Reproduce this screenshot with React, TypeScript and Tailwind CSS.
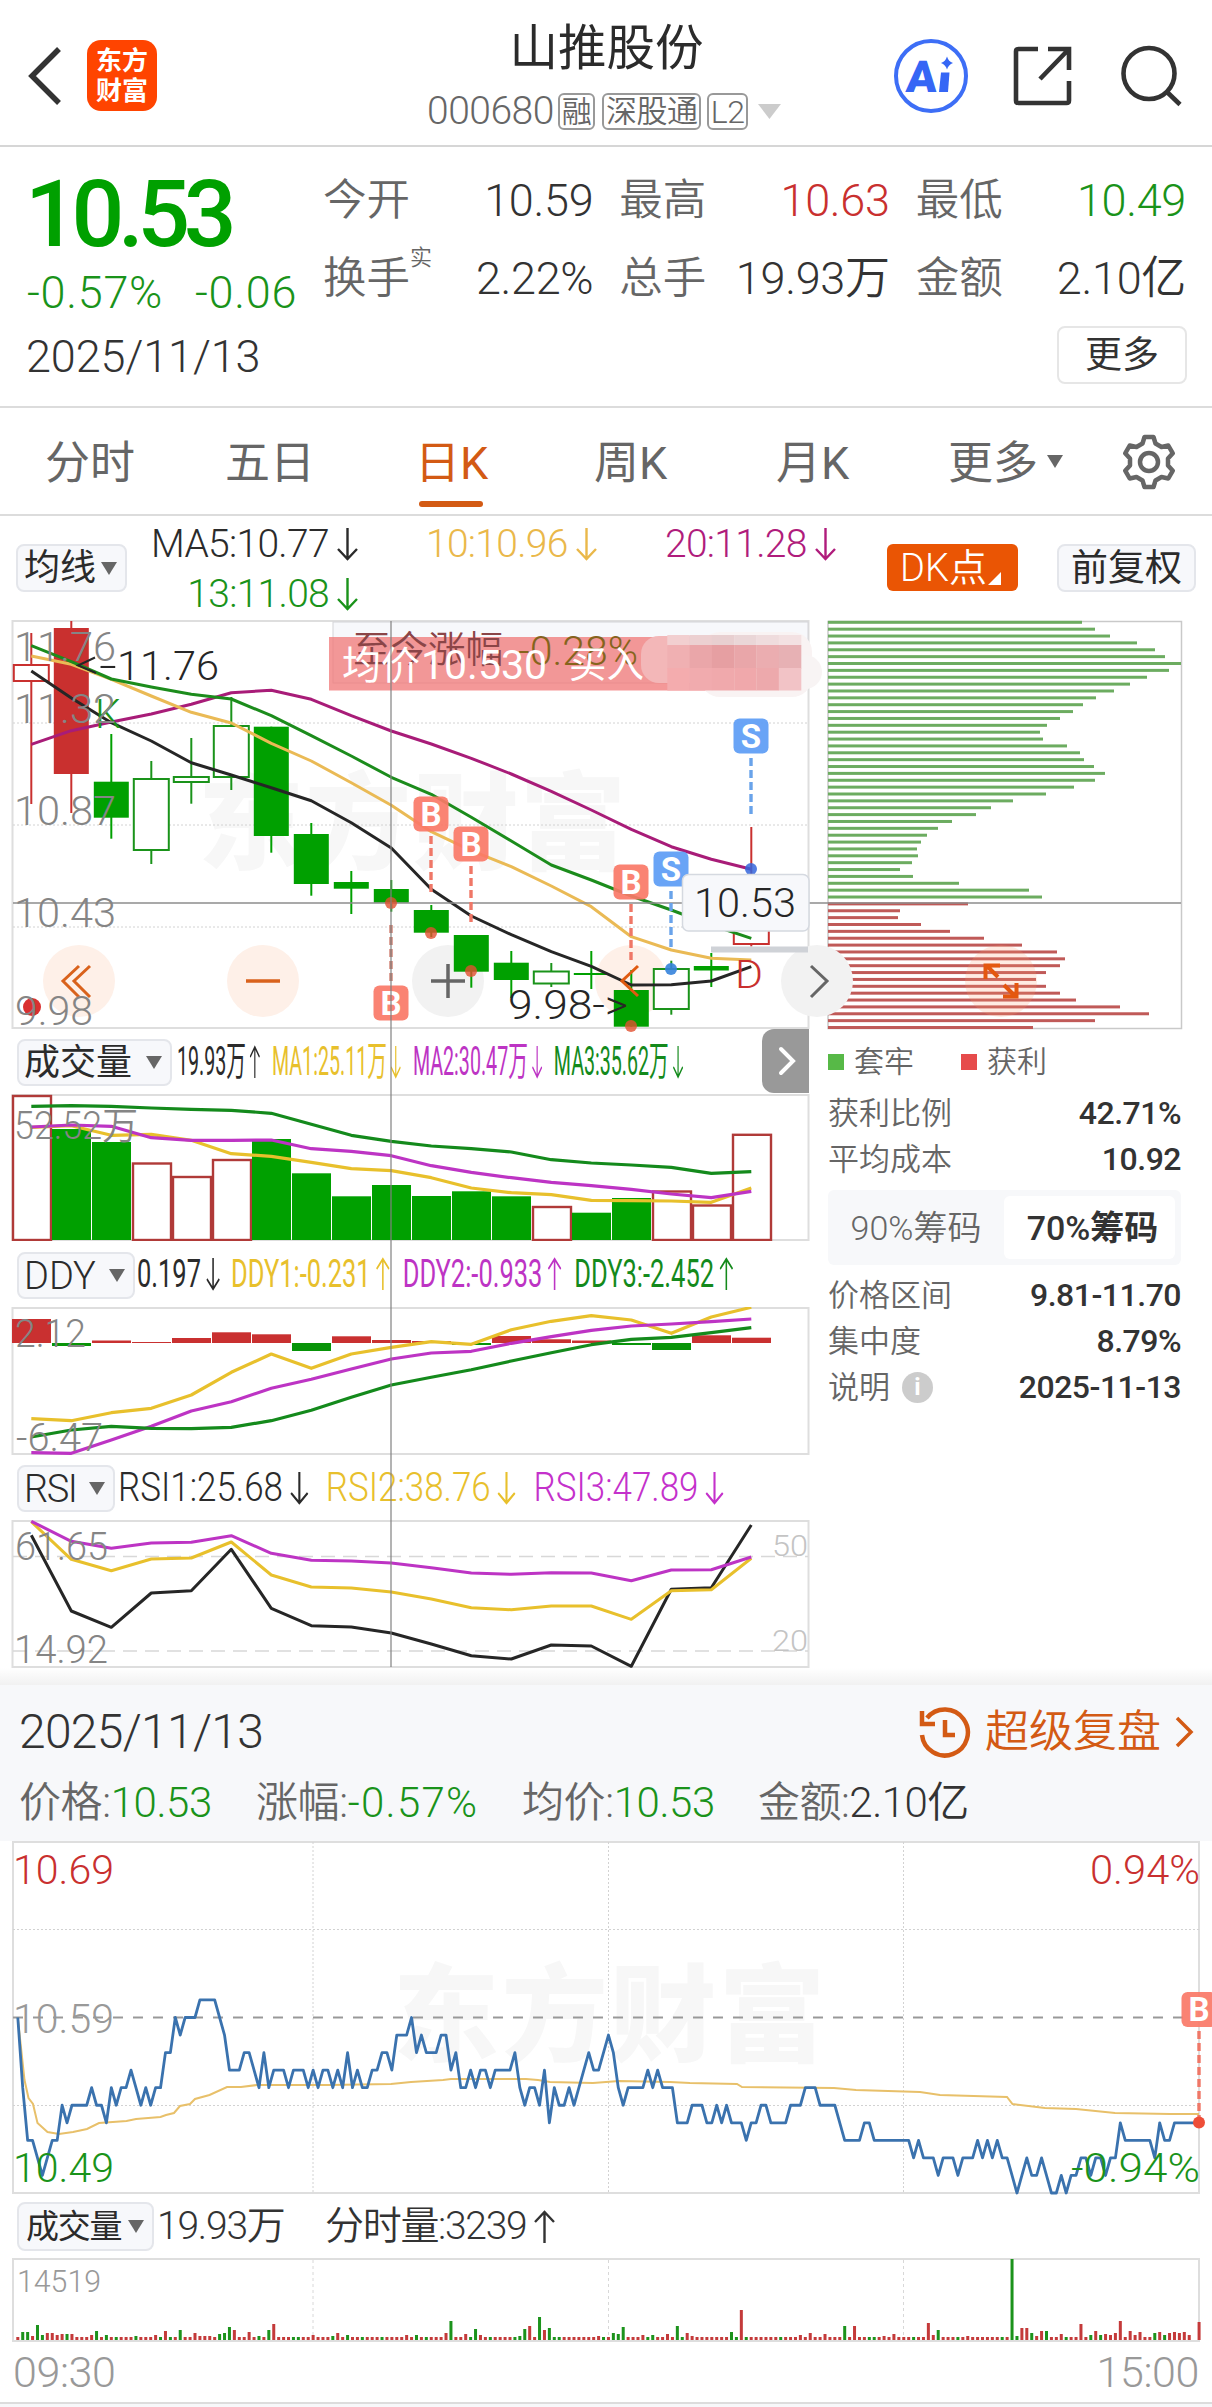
import type { ReactNode } from 'react'

const GREEN = '#00a000'
const RED = '#c9302f'
const STEP = 40
const FIRST = 31.3

// [kind, bodyTop, bodyBottom, wickTop, wickBottom]
type Candle = [string, number, number, number, number]
const candles: Candle[] = [
  ['up', 665, 681, 633, 804],
  ['redFill', 628, 774, 621, 813],
  ['down', 781.7, 817.7, 734, 838.7],
  ['hollow', 779, 850, 761, 864],
  ['hollow', 777, 782, 738, 803.7],
  ['hollow', 726, 777, 697, 790],
  ['down', 726.7, 836, 726.7, 852.7],
  ['down', 834, 884, 823, 895.7],
  ['down', 882, 888.7, 871, 914],
  ['down', 889, 902.7, 880, 911.7],
  ['down', 910, 932.7, 905, 937],
  ['down', 935, 971.7, 935, 987.7],
  ['down', 962.7, 980, 951, 998],
  ['hollow', 971.5, 983.5, 963, 987],
  ['down', 973, 975, 951, 989],
  ['down', 990, 1026.7, 970, 1026.7],
  ['hollow', 969, 1009, 960.7, 1014.7],
  ['down', 966, 970.5, 953, 987],
  ['up', 900, 944, 827, 946.5],
]

const priceLines = [
  { color: '#a81c78', ys: [744.3, 730.7, 722, 714, 704.3, 692.7, 690.3, 699.3, 715.7, 731, 744, 758.3, 774, 791.3, 810, 829.3, 846.7, 859.3, 869.3] },
  { color: '#eaba55', ys: [656, 664.3, 679.3, 696, 712.3, 723, 743.3, 761, 782.7, 805.3, 831.7, 850.7, 866.7, 886, 906.7, 936.7, 950, 958.3, 960] },
  { color: '#1c8c1c', ys: [645.7, 661.7, 679, 687, 694.3, 699, 715.7, 735.7, 756, 777.3, 794.3, 817.3, 841, 865, 880, 896, 910, 925, 938.3] },
  { color: '#262626', ys: [671, 698, 722.7, 741, 762.7, 775, 787.7, 800.7, 822.7, 848, 889.3, 916, 934.7, 951.7, 966.3, 985, 984.7, 981, 966.7] },
]

const volTops = [1095, 1129, 1142, 1162.5, 1176, 1159, 1139, 1173.3, 1196.3, 1185, 1196, 1191.3, 1196.3, 1206, 1212.7, 1198, 1190.5, 1204.5, 1133.8]
const volUp = [0, 3, 4, 5, 13, 16, 17, 18]
const volLines = [
  { color: '#e8c02c', ys: [1127.3, 1125.7, 1135.3, 1134.3, 1140.3, 1153.7, 1156.3, 1162.3, 1168.7, 1170.7, 1177.7, 1188, 1192.7, 1194.7, 1200.3, 1200.7, 1201, 1202.3, 1188] },
  { color: '#bd34c4', ys: [1127, 1125, 1126.3, 1137.7, 1140.3, 1140.3, 1140, 1148.7, 1151.3, 1155.7, 1165.7, 1172.3, 1177.7, 1182.3, 1185.7, 1189.3, 1194, 1197.7, 1191.3] },
  { color: '#148a1c', ys: [1106.3, 1105.7, 1106.3, 1108, 1109.3, 1110.3, 1113.3, 1124.3, 1135.3, 1141.3, 1146, 1148.7, 1152, 1159.7, 1163, 1165, 1167.3, 1173.3, 1171.7] },
]

// positive = red above the zero line, negative = green below
const ddyBars = [24, -3, 2.5, 1, 5, 10.7, 8.7, -8, 6.7, 3, 2, -2, 7, 3.7, 2.5, -2, -7, 7.7, 5.3]
const ddyLines = [
  { color: '#e8c02c', ys: [1418.7, 1420.7, 1412.7, 1408.3, 1395, 1372.3, 1354, 1368.3, 1354, 1347.3, 1341.7, 1344.3, 1329.7, 1321.3, 1315.7, 1320, 1333.3, 1317, 1307.3] },
  { color: '#bd34c4', ys: [1452.7, 1453.3, 1440, 1426.3, 1411, 1401.7, 1388.3, 1379.3, 1369, 1359, 1353, 1351.3, 1343.3, 1336.7, 1330.3, 1326, 1324, 1321.7, 1319] },
  { color: '#148a1c', ys: [1437, 1430, 1426.3, 1428.3, 1428.7, 1427.3, 1420.7, 1410.3, 1397.3, 1385, 1377.3, 1369.7, 1361, 1352.7, 1344.7, 1339.3, 1337.3, 1332.7, 1327.7] },
]

const rsiLines = [
  { color: '#262626', ys: [1535.3, 1611, 1627.3, 1593, 1590.7, 1549.3, 1608.3, 1625.7, 1627, 1633, 1644, 1655.7, 1659, 1645, 1646, 1666.3, 1589.3, 1587.7, 1525] },
  { color: '#e8c02c', ys: [1521.7, 1559.3, 1570.7, 1559, 1558, 1542, 1575, 1587, 1588, 1592, 1599, 1607.7, 1609.7, 1606, 1606, 1619.3, 1590.7, 1589.7, 1558.3] },
  { color: '#bd34c4', ys: [1521.3, 1541.3, 1548.3, 1543, 1542.3, 1535.7, 1553.3, 1560.3, 1561, 1563, 1567.7, 1573, 1574.3, 1572.7, 1573, 1580.7, 1570, 1569.7, 1557] },
]

const chipWidths = [
  254, 267, 282, 309, 327, 337, 353, 341, 319, 302, 286, 268, 255, 245, 232, 219, 212, 215, 239, 252,
  256, 266, 277, 267, 246, 218, 185, 163, 148, 124, 110, 99, 93, 89, 90, 84, 72, 85, 131, 201, 214,
  140, 72, 70, 93, 122, 156, 194, 229, 237, 232, 218, 208, 218, 232, 248, 292, 321, 267, 205,
]

// cents below the previous close, one entry a minute
const minutes = [
  0, 4, 7, 7, 8, 9, 8, 7, 7, 5, 6, 5, 5, 5, 5, 4, 5, 5, 6, 4, 5, 4, 4, 3, 4, 5, 4, 5, 4, 4,
  2, 2, 0, 1, 0, 0, 0, -1, -1, -1, -1, 0, 1, 3, 3, 3, 2, 2, 3, 4, 2, 4, 3, 3, 3, 4, 3, 3, 3, 4,
  3, 4, 3, 3, 4, 3, 4, 2, 4, 3, 4, 4, 3, 3, 2, 2, 3, 1, 1, 1, 0, 2, 1, 2, 2, 2, 1, 1, 3, 2,
  4, 4, 3, 4, 3, 3, 4, 3, 3, 3, 3, 2, 4, 5, 4, 4, 5, 3, 6, 4, 5, 5, 4, 5, 4, 3, 2, 3, 3, 2,
  1, 2, 4, 5, 4, 4, 4, 4, 3, 4, 3, 4, 4, 4, 6, 6, 6, 5, 5, 5, 6, 6, 5, 6, 5, 6, 6, 6, 7, 6,
  6, 5, 5, 6, 6, 6, 6, 5, 5, 5, 4, 4, 4, 5, 5, 5, 5, 6, 7, 7, 7, 7, 6, 6, 7, 7, 7, 7, 7, 7,
  7, 7, 8, 7, 8, 8, 8, 9, 8, 8, 8, 9, 8, 8, 8, 7, 8, 7, 8, 7, 8, 8, 9, 10, 9, 8, 9, 9, 8, 9,
  10, 10, 9, 10, 9, 9, 8, 8, 9, 8, 8, 9, 8, 8, 6, 7, 7, 7, 7, 7, 7, 8, 6, 7, 7, 6, 6, 6, 6, 6, 6,
]
const minuteX = (i: number) => 17.8 + i * 4.922

const average =
  '17.8,2018 24.5,2080 28.5,2098 33,2104 37.5,2123 47.5,2132 59,2134 73,2132 87,2129 99,2123 126.5,2121 136,2119 160.5,2117 166,2115 174,2113 180,2106 190,2104 195,2099 209.5,2095 227,2087 241,2087 257,2085 328,2085 391,2084 411,2082 443,2080 451,2079 526,2079 538,2080 550,2082 593,2083 619,2081 670,2082 690,2083 737,2084 742,2087 834,2088 856,2090 920,2092 940,2095 1007,2097 1012.5,2104 1045,2108 1076,2109 1115,2113 1170,2114 1199,2114'

// [minute, height, falling]
const spikes: [number, number, number][] = [
  [1, 8, 1], [2, 8, 1], [3, 4, 0], [4, 15, 1], [5, 5, 1], [6, 7, 0], [7, 7, 0], [8, 5, 0], [9, 6, 0], [10, 6, 1], [11, 6, 0],
  [15, 5, 0], [16, 9, 1], [18, 5, 1], [24, 4, 1], [28, 5, 0], [30, 9, 0], [33, 10, 1], [36, 7, 0], [37, 4, 0], [38, 4, 0], [39, 4, 0],
  [41, 6, 1], [42, 7, 1], [43, 13, 1], [44, 10, 0], [47, 8, 0], [49, 4, 1], [51, 10, 1], [52, 16, 0], [60, 5, 0], [64, 4, 1], [65, 7, 0],
  [67, 5, 1], [79, 5, 0], [81, 5, 1], [87, 7, 0], [88, 19, 1], [91, 6, 0], [93, 11, 1], [94, 5, 0], [102, 4, 1], [103, 11, 1],
  [104, 14, 0], [106, 23, 1], [107, 10, 0], [108, 12, 1], [118, 4, 0], [121, 7, 1], [122, 6, 1], [123, 13, 1], [127, 5, 0], [129, 5, 1],
  [132, 6, 0], [134, 14, 1], [136, 7, 0], [137, 4, 0], [145, 8, 1], [147, 30, 0], [159, 5, 0], [161, 7, 0], [164, 6, 0], [168, 14, 1],
  [170, 14, 0], [176, 4, 0], [178, 6, 0], [185, 17, 0], [186, 5, 0], [187, 10, 1], [193, 4, 0], [202, 81, 1], [203, 4, 1], [204, 12, 0],
  [205, 12, 0], [206, 7, 1], [207, 4, 0], [208, 9, 0], [209, 9, 1], [212, 6, 0], [216, 16, 0], [218, 5, 1], [219, 9, 0], [220, 5, 1],
  [221, 6, 0], [222, 5, 0], [223, 7, 0], [224, 19, 0], [226, 9, 0], [227, 5, 0], [228, 8, 0], [231, 7, 1], [232, 8, 0], [233, 5, 1],
  [234, 7, 0], [235, 8, 0], [236, 7, 0], [237, 8, 0], [238, 5, 0], [240, 18, 0],
]

const mosaic = [
  ['#f3d3d4', '#f2cfd0', '#ecd0d1', '#e8cfd0', '#ead6d7', '#efdcdd', '#f3e1e2'],
  ['#f3b5b7', '#f0b0b2', '#eaa6a9', '#e69fa2', '#e9a6a9', '#ebadb0', '#e7b1b4'],
  ['#f4a5a7', '#f4acae', '#f1abae', '#f0a9ac', '#f0a8ab', '#eda9ac', '#f2c3c6'],
]

function line(ys: number[]) {
  return ys.map((y, i) => `${FIRST + i * STEP},${y}`).join(' ')
}

interface LabelProps {
  x: number
  y: number
  w: number
  size?: number
  fill?: string
  weight?: number
  children: ReactNode
}

function Label({ x, y, w, size = 41, fill = '#858585', weight = 350, children }: LabelProps) {
  return (
    <text x={x} y={y} textLength={w} lengthAdjust="spacingAndGlyphs" fontSize={size} fill={fill} fontWeight={weight}>
      {children}
    </text>
  )
}

function Lines({ data, width = 3 }: { data: { color: string; ys: number[] }[]; width?: number }) {
  return (
    <>
      {data.map((l) => (
        <polyline key={l.color} points={line(l.ys)} fill="none" stroke={l.color} strokeWidth={width} strokeLinejoin="round" />
      ))}
    </>
  )
}

function Frame({ x = 12.5, y, w = 796, h }: { x?: number; y: number; w?: number; h: number }) {
  return <rect x={x} y={y} width={w} height={h} fill="none" stroke="#dedede" strokeWidth="2" />
}

function Arrow({ up = false }: { up?: boolean }) {
  return (
    <svg width="21" height="34" viewBox="0 0 21 34" className="ml-[8px] shrink-0" fill="none" stroke="currentColor" strokeWidth="2.4">
      {up ? <path d="M10.5 33V2M1 12 10.5 2 20 12" /> : <path d="M10.5 1v31M1 22l9.5 10L20 22" />}
    </svg>
  )
}

function Caret({ className = 'text-[#666]' }: { className?: string }) {
  return (
    <svg width="16" height="13" viewBox="0 0 16 13" className={className}>
      <path d="M0 0h16L8 13z" fill="currentColor" />
    </svg>
  )
}

function Badge({ x, y, kind }: { x: number; y: number; kind: 'B' | 'S' }) {
  return (
    <g>
      <rect x={x - 17.5} y={y} width="35" height="35" rx="6" fill={kind === 'B' ? '#fa7867' : '#5c9cf5'} fillOpacity="0.92" />
      <text x={x} y={y + 29} textAnchor="middle" fontSize="33" fontWeight="700" fill="#fff">
        {kind}
      </text>
    </g>
  )
}

function Dash({ x, y1, y2, color }: { x: number; y1: number; y2: number; color: string }) {
  return <line x1={x} x2={x} y1={y1} y2={y2} stroke={color} strokeWidth="3.4" strokeDasharray="8 4" />
}

function Reading({ color, up, children }: { color: string; up?: boolean; children: ReactNode }) {
  return (
    <span className={`flex items-center leading-none whitespace-nowrap ${color}`}>
      {children}
      <Arrow up={up} />
    </span>
  )
}

function Picker({ className, children }: { className: string; children: ReactNode }) {
  return (
    <button
      className={`flex shrink-0 items-center justify-between rounded-[8px] border-2 border-[#e4e6eb] bg-[#f7f8fb] leading-none whitespace-nowrap text-[#2b2b2b] ${className}`}
    >
      {children}
      <Caret />
    </button>
  )
}

function Header() {
  return (
    <header className="grid h-[147px] grid-cols-[429px_352px_1fr] border-b-2 border-[#d6d6d6]">
      <div className="flex items-center pt-[6px] pl-[27px]">
        <svg width="36" height="60" viewBox="0 0 36 60" fill="none" stroke="#333" strokeWidth="5.5">
          <path d="M32 3 5 30l27 27" />
        </svg>
        <div className="ml-[24px] flex h-[71px] w-[70px] flex-col items-center justify-center rounded-[14px] bg-[#ff4400] text-[26px] leading-[30px] font-bold text-white">
          <span>东方</span>
          <span>财富</span>
        </div>
      </div>
      <div className="flex flex-col items-center">
        <h1 className="mt-[25px] ml-[3px] text-[48.5px] leading-none font-normal text-[#2b2b2b]">山推股份</h1>
        <div className="mt-[19px] flex h-[38px] w-full items-center text-[39px] leading-none font-[350] tracking-[-0.5px] text-[#666]">
          <span className="-ml-[2px] w-[131px]">000680</span>
          <span className="flex h-[37px] w-[38px] items-center justify-center rounded-[6px] border-2 border-[#999] text-[30px]">融</span>
          <span className="ml-[7px] flex h-[37px] w-[99px] items-center justify-center rounded-[6px] border-2 border-[#999] text-[31px]">深股通</span>
          <span className="ml-[6px] flex h-[37px] w-[41px] items-center justify-center rounded-[6px] border-2 border-[#999] text-[32px]">L2</span>
          <svg width="23" height="15" viewBox="0 0 23 15" className="ml-[10px]">
            <path d="M0 0h23L11.5 15z" fill="#ccc" />
          </svg>
        </div>
      </div>
      <div className="flex items-center pt-[6px] pl-[112px]">
        <svg width="76" height="76" viewBox="0 0 76 76">
          <circle cx="38" cy="38" r="35" fill="none" stroke="#3d6ef6" strokeWidth="4" />
          <text x="12" y="54" fontSize="44" fontWeight="900" fill="#3566f5" textLength="31" lengthAdjust="spacingAndGlyphs" transform="skewX(-4) translate(4 0)">
            A
          </text>
          <path d="M48 34.5h8.500L55 54h-9z" fill="#3566f5" />
          <path d="M54 18.500q1.500 5 6 6.500-4.500 1.500-6 6.500-1.500-5-6-6.500 4.500-1.500 6-6.500z" fill="#3566f5" />
        </svg>
        <svg width="60" height="60" viewBox="0 0 60 60" className="ml-[44px]" fill="none" stroke="#333" strokeWidth="4.600">
          <path d="M25 3H5.500Q3 3 3 5.500v49Q3 57 5.500 57h48q2.500 0 2.500-2.500V35" />
          <path d="M35 3h21v21M56 3 27 33" />
        </svg>
        <svg width="62" height="62" viewBox="0 0 62 62" className="ml-[47px]" fill="none" stroke="#333" strokeWidth="4.600">
          <circle cx="29" cy="28.500" r="25.500" />
          <path d="M46 46 60 59.500" />
        </svg>
      </div>
    </header>
  )
}

function Stat({ label, value, color = 'text-[#333]', sup }: { label: string; value: string; color?: string; sup?: string }) {
  return (
    <div className="flex h-[46px] items-center justify-between leading-none">
      <span className="-ml-[2px] flex pt-[4px] text-[43.5px] font-[350] text-[#666]">
        {label}
        {sup && <sup className="-top-[10px] text-[22px] leading-none">{sup}</sup>}
      </span>
      <span className={`pt-[3px] text-[45px] font-[350] tracking-[-0.3px] ${color}`}>{value}</span>
    </div>
  )
}

function Quote() {
  return (
    <section className="flex h-[261px] border-b-2 border-[#dcdcdc]">
      <div className="w-[325px] pl-[27px] font-[350]">
        <div className="mt-[21px] -ml-[2px] text-[93px] leading-none font-medium tracking-[-6.400px] text-[#00a000]">10.53</div>
        <div className="mt-[9px] flex text-[45px] leading-none tracking-[0.700px] text-[#1a931a]">
          <span className="w-[168px]">-0.57%</span>
          <span>-0.06</span>
        </div>
        <div className="mt-[19px] -ml-[1px] text-[45px] leading-none tracking-[-0.100px] text-[#333]">2025/11/13</div>
      </div>
      <div className="w-[861px]">
        <div className="mt-[29px] grid grid-cols-3 gap-x-[28px] gap-y-[32px]">
          <Stat label="今开" value="10.59" />
          <Stat label="最高" value="10.63" color="text-[#c9302f]" />
          <Stat label="最低" value="10.49" color="text-[#1a931a]" />
          <Stat label="换手" value="2.22%" sup="实" />
          <Stat label="总手" value="19.93万" />
          <Stat label="金额" value="2.10亿" />
        </div>
        <button className="mt-[26px] -mr-[1px] ml-auto flex h-[58px] w-[130px] items-center justify-center rounded-[8px] border-2 border-[#e6e6e6] text-[37px] leading-none text-[#333]">
          更多
        </button>
      </div>
    </section>
  )
}

const tabs = [
  { name: '分时', width: 'w-[180px]' },
  { name: '五日', width: 'w-[190px]' },
  { name: '日K', width: 'w-[179px]', active: true },
  { name: '周K', width: 'w-[182px]' },
  { name: '月K', width: 'w-[172px]' },
]

function Tabs() {
  return (
    <nav className="flex h-[108px] border-b-2 border-[#dcdcdc] pl-[45px] text-[45px] leading-none text-[#666]">
      {tabs.map((t) => (
        <div key={t.name} className={`pt-[33px] ${t.width} ${t.active ? 'text-[#d35a14]' : ''}`}>
          {t.name}
          {t.active && <div className="mt-[15px] ml-[4px] h-[6px] w-[64px] rounded-full bg-[#d35a14]" />}
        </div>
      ))}
      <div className="flex w-[173px] pt-[33px]">
        更多
        <Caret className="mt-[14px] ml-[9px] text-[#666]" />
      </div>
      <svg width="56" height="56" viewBox="0 0 56 56" className="mt-[26px]" fill="none" stroke="#666" strokeWidth="4.500" strokeLinejoin="round">
        <path d="M23.500 3h9l2 6.500 6 3.500 6.800-1.500 4.500 7.800-4.800 5.200v7l4.800 5.200-4.500 7.800-6.800-1.500-6 3.500-2 6.500h-9l-2-6.500-6-3.500-6.800 1.500-4.500-7.800L9 31.500v-7l-4.800-5.200 4.500-7.800 6.800 1.500 6-3.500z" />
        <circle cx="28" cy="28" r="9" />
      </svg>
    </nav>
  )
}

function Averages() {
  return (
    <div className="flex h-[104px] text-[39px] font-[350]">
      <Picker className="mt-[28px] ml-[16px] h-[48px] w-[111px] pr-[8px] pl-[6px] text-[36px] font-normal">均线</Picker>
      <div className="mt-[3px] ml-[24px] grid w-[736px] grid-cols-[275px_239px_222px] grid-rows-[50px_50px] tracking-[-0.700px]">
        <Reading color="text-[#2b2b2b]">MA5:10.77</Reading>
        <Reading color="text-[#eab84a]">10:10.96</Reading>
        <Reading color="text-[#b01c7c]">20:11.28</Reading>
        <div className="flex w-[207px] justify-end">
          <Reading color="text-[#1a931a]">13:11.08</Reading>
        </div>
      </div>
      <button className="mt-[28px] flex h-[47px] w-[131px] rounded-[6px] bg-[#ea5504] pl-[13px] text-[38px] leading-[48px] font-[350] text-white">
        DK点
        <svg width="13" height="13" viewBox="0 0 13 13" className="mt-[28px] ml-[1px] shrink-0">
          <path d="M13 0v13H0z" fill="#fff" />
        </svg>
      </button>
      <button className="mt-[28px] ml-[39px] flex h-[48px] w-[139px] items-center justify-center rounded-[8px] border-2 border-[#e4e6eb] bg-[#f7f8fb] text-[37px] leading-none font-normal text-[#2b2b2b]">
        前复权
      </button>
    </div>
  )
}

function CandleChart() {
  return (
    <svg width="828" height="409" viewBox="0 620 828 409" className="block overflow-visible">
      <text x="198" y="861" textLength="428" fontSize="106" fontWeight="900" fill="#f7f7f7">
        东方财富
      </text>
      <Frame y={621} h={407} />
      {[723, 825, 927].map((y) => (
        <line key={y} x1="13" x2="808" y1={y} y2={y} stroke="#d2d2d2" strokeDasharray="2 2" />
      ))}
      {[[79, '#fef0e8'], [263, '#fef0e8'], [448, '#f2f2f2'], [631, '#fef0e8'], [817, '#f2f2f2']].map(([x, c]) => (
        <circle key={x} cx={x} cy="981" r="36" fill={c as string} />
      ))}
      {candles.map(([kind, top, bottom, high, low], i) => {
        const x = FIRST + i * STEP
        const color = kind === 'up' || kind === 'redFill' ? RED : kind === 'hollow' ? '#1a931a' : GREEN
        const open = kind === 'up' || kind === 'hollow'
        return (
          <g key={i}>
            <line x1={x} x2={x} y1={high} y2={low} stroke={color} strokeWidth="2" />
            <rect
              x={x - 17.5}
              y={top}
              width="35"
              height={bottom - top}
              fill={open ? '#fff' : color}
              stroke={open ? color : 'none'}
              strokeWidth="2"
            />
          </g>
        )
      })}
      <rect x="711" y="946.500" width="97" height="6" fill="#cfd2d7" />
      <Lines data={priceLines} />
      <line x1="13" x2="828" y1="903" y2="903" stroke="#8c8c8c" strokeWidth="1.500" />

      <Label x={14} y={661} w={102}>11.76</Label>
      <Label x={95} y={728} w={26} fill="#1a931a">K</Label>
      <Label x={14} y={723} w={102}>11.32</Label>
      <Label x={14} y={825} w={102}>10.87</Label>
      <Label x={14} y={927} w={102}>10.43</Label>
      <path d="M95 657.500 78 665.500l18 7.500" fill="none" stroke="#262626" strokeWidth="2" />
      <Label x={99} y={680} w={18} fill="#262626">-</Label>
      <Label x={117} y={680} w={102} fill="#262626">11.76</Label>
      <Label x={508} y={1019} w={120} fill="#262626">{'9.98->'}</Label>
      <Label x={735} y={988} w={28} size={38} fill="#c9302f">D</Label>

      {/* overlapping cost banner */}
      <rect x="333" y="622" width="475" height="61" fill="#f7f8fb" stroke="#d4d4d8" />
      <rect x="329" y="637" width="473" height="53.500" fill="#f07878" fillOpacity="0.76" />
      <Label x={353} y={663} w={150} size={37} fill="#8b4547">至今涨幅</Label>
      <Label x={518} y={665} w={120} fill="#85641c">-0.28%</Label>
      <Label x={342} y={679} w={78} size={39} fill="#fff" weight={400}>均价</Label>
      <Label x={421} y={679} w={126} fill="#fff" weight={400}>10.530</Label>
      <Label x={569} y={678} w={75} size={37} fill="#fff" weight={400}>买入</Label>
      <rect x="700" y="632" width="112" height="65" rx="20" fill="#f9f3f3" />
      <circle cx="805" cy="672" r="17" fill="#f8f4f4" />
      <rect x="641" y="636" width="70" height="47" rx="18" fill="#f3b7b8" />
      {mosaic.map((row, r) =>
        row.map((c, i) =>
          i === 0 ? null : (
            <rect key={`${r}-${i}`} x={645 + i * 22.3} y={[635, 645, 668][r]} width="22.500" height={[10.5, 23.5, 22.5][r]} fill={c} />
          ),
        ),
      )}

      <g fill="none" strokeWidth="3">
        <path d="M79 966 63 981l16 16M90 966 74 981l16 16" stroke="#d9621c" />
        <path d="M246 981h34" stroke="#d9621c" strokeWidth="3.500" />
        <path d="M431 981h34M448 964v34" stroke="#666" strokeWidth="3.500" />
        <path d="M638 966l-16 15 16 15" stroke="#e05a10" />
        <path d="M811 966l16 15-16 16" stroke="#666" />
      </g>
      <circle cx="32" cy="1007" r="9" fill="#d93030" />
      <Label x={15} y={1025} w={78}>9.98</Label>

      <Dash x={391} y1={925} y2={981} color="#d08072" />
      <Dash x={431} y1={836} y2={892} color="#ef7767" />
      <Dash x={471} y1={866} y2={922} color="#ef7767" />
      <Dash x={631} y1={904} y2={960} color="#ef7767" />
      <Dash x={671} y1={891} y2={948} color="#69a3ea" />
      <Dash x={751} y1={758} y2={816} color="#69a3ea" />
      {[[391, 903], [431, 933], [471, 971], [631, 1026]].map(([x, y]) => (
        <circle key={x} cx={x} cy={y} r="6" fill="#e2502f" fillOpacity="0.8" />
      ))}
      <circle cx="671" cy="969" r="6" fill="#3583dc" fillOpacity="0.9" />
      <circle cx="751" cy="869" r="6" fill="#3566dc" fillOpacity="0.85" />
      <Badge x={391} y={985.5} kind="B" />
      <Badge x={431} y={796.5} kind="B" />
      <Badge x={471} y={826.5} kind="B" />
      <Badge x={631} y={864.5} kind="B" />
      <Badge x={671} y={851.5} kind="S" />
      <Badge x={751} y={718.5} kind="S" />

      <rect x="682.500" y="874.500" width="126.500" height="56.500" rx="6" fill="#f7f8fb" stroke="#d5d9e0" strokeWidth="1.500" />
      <Label x={694} y={917} w={102} fill="#262626">10.53</Label>
    </svg>
  )
}

function VolumeChart() {
  return (
    <svg width="828" height="147" viewBox="0 1094 828 147" className="block">
      <Frame y={1095} h={145} />
      {volTops.map((top, i) => {
        const x = 12 + i * STEP
        return volUp.includes(i) ? (
          <rect key={i} x={x + 1} y={top + 1} width="38" height={1239 - top} fill="#fff" stroke="#b03a38" strokeWidth="2.400" />
        ) : (
          <rect key={i} x={x} y={top} width="39" height={1240 - top} fill={GREEN} />
        )
      })}
      <Lines data={volLines} width={3.2} />
      <Label x={14} y={1139} w={124} size={38}>52.52万</Label>
    </svg>
  )
}

function DdyChart() {
  return (
    <svg width="828" height="148" viewBox="0 1307 828 148" className="block">
      <Frame y={1308} h={146} />
      {ddyBars.map((v, i) => (
        <rect key={i} x={12 + i * STEP} y={v > 0 ? 1343 - v : 1343} width="39" height={Math.abs(v)} fill={v > 0 ? '#c93030' : '#089408'} />
      ))}
      <Lines data={ddyLines} width={3.2} />
      <Label x={15} y={1347} w={71} size={38}>2.12</Label>
      <Label x={16} y={1451} w={87} size={38}>-6.47</Label>
    </svg>
  )
}

function RsiChart() {
  return (
    <svg width="828" height="148" viewBox="0 1520 828 148" className="block">
      <Frame y={1521} h={146} />
      {[1556.5, 1651].map((y) => (
        <line key={y} x1="13" x2="808" y1={y} y2={y} stroke="#d8d8d8" strokeWidth="1.500" strokeDasharray="14 8" />
      ))}
      <Lines data={rsiLines} width={3} />
      <Label x={15} y={1560} w={93} size={38}>61.65</Label>
      <Label x={14} y={1663} w={94} size={38}>14.92</Label>
      <Label x={772} y={1556} w={36} size={30} fill="#c4c4c4">50</Label>
      <Label x={772} y={1651} w={36} size={30} fill="#c4c4c4">20</Label>
    </svg>
  )
}

function ChipChart() {
  return (
    <svg width="384" height="409" viewBox="828 620 384 409" className="block overflow-visible">
      <rect x="828" y="621.500" width="353.500" height="407" fill="none" stroke="#c9c9c9" strokeWidth="1.500" />
      {chipWidths.map((w, i) => (
        <rect key={i} x="828" y={620.8 + i * 6.868} width={w} height="3" fill={i < 41 ? '#6cac60' : '#c05a58'} />
      ))}
      <line x1="828" x2="1181" y1="903" y2="903" stroke="#8c8c8c" strokeWidth="1.500" />
      <circle cx="1001" cy="981" r="36" fill="#ff9a70" fillOpacity="0.2" />
      <path d="M998 977l-12-12M985.500 979v-13.500H1000M1004 985l12 12M1016.500 983v13.500H1003" fill="none" stroke="#e4570f" strokeWidth="4" />
    </svg>
  )
}

function ChipRow({ label, value, info }: { label: string; value: string; info?: boolean }) {
  return (
    <div className="flex h-[46px] items-center justify-between leading-none">
      <span className="flex items-center text-[31px] font-[350] text-[#666]">
        {label}
        {info && (
          <i className="ml-[12px] flex h-[31px] w-[31px] items-center justify-center rounded-full bg-[#ccc] text-[24px] font-bold text-white not-italic">i</i>
        )}
      </span>
      <span className="text-[32px] font-medium tracking-[-0.500px] text-[#333]">{value}</span>
    </div>
  )
}

function ChipPanel() {
  return (
    <aside className="w-[353px]">
      <ChipChart />
      <div className="mt-[16px] flex h-[34px] items-center text-[30px] leading-none font-[350] text-[#666]">
        <span className="mr-[10px] h-[16px] w-[16px] bg-[#57b947]" />
        套牢
        <span className="mr-[10px] ml-[47px] h-[16px] w-[16px] bg-[#e64b4b]" />
        获利
      </div>
      <div className="mt-[11px]">
        <ChipRow label="获利比例" value="42.71%" />
        <ChipRow label="平均成本" value="10.92" />
      </div>
      <div className="mt-[8px] flex h-[75px] rounded-[6px] bg-[#f7f8fa] p-[6px] text-[34px] leading-none">
        <button className="w-[170px] pr-[6px] font-[350] text-[#666]">90%筹码</button>
        <button className="w-[171px] rounded-[6px] bg-white pl-[6px] font-medium text-[#333]">
          70%<b className="font-semibold">筹码</b>
        </button>
      </div>
      <div className="mt-[7px]">
        <ChipRow label="价格区间" value="9.81-11.70" />
        <ChipRow label="集中度" value="8.79%" />
        <ChipRow label="说明" value="2025-11-13" info />
      </div>
    </aside>
  )
}

function Indicators() {
  return (
    <main className="flex">
      <div className="relative w-[828px]">
        <CandleChart />
        <div className="flex h-[65px] pl-[17px] text-[40px] font-normal">
          <Picker className="mt-[10px] h-[47px] w-[155px] pr-[8px] pl-[5px] text-[36px]">成交量</Picker>
          <div className="ml-[5px] flex w-[560px] origin-left scale-x-[0.491] items-center">
            <Reading color="mr-[24px] text-[#2b2b2b]" up>19.93万</Reading>
            <Reading color="mr-[24px] text-[#e8c02c]">MA1:25.11万</Reading>
            <Reading color="mr-[24px] text-[#bd34c4]">MA2:30.47万</Reading>
            <Reading color="text-[#148a1c]">MA3:35.62万</Reading>
          </div>
          <button className="mr-[19px] ml-auto flex h-[64px] w-[47px] shrink-0 items-center justify-center rounded-l-[12px] bg-[#999] pl-[5px]">
            <svg width="20" height="30" viewBox="0 0 20 30" fill="none" stroke="#fff" strokeWidth="4" strokeLinecap="round">
              <path d="M3 3l12 12L3 27" />
            </svg>
          </button>
        </div>
        <VolumeChart />
        <div className="flex h-[66px] pl-[17px] text-[39px] font-normal">
          <Picker className="mt-[11px] h-[47px] w-[118px] pr-[8px] pl-[5px] text-[38px] font-[350]">DDY</Picker>
          <div className="ml-[2px] flex origin-left scale-x-[0.653] items-center">
            <Reading color="mr-[17px] text-[#2b2b2b]">0.197</Reading>
            <Reading color="mr-[20px] text-[#e8c02c]" up>DDY1:-0.231</Reading>
            <Reading color="mr-[20px] text-[#bd34c4]" up>DDY2:-0.933</Reading>
            <Reading color="text-[#148a1c]" up>DDY3:-2.452</Reading>
          </div>
        </div>
        <DdyChart />
        <div className="flex h-[65px] pl-[17px] text-[40px] font-[350]">
          <Picker className="mt-[10px] h-[47px] w-[98px] pr-[8px] pl-[5px] text-[38px] tracking-[-1.500px]">RSI</Picker>
          <div className="ml-[3px] flex origin-left scale-x-[0.874] items-center">
            <Reading color="mr-[20px] text-[#2b2b2b]">RSI1:25.68</Reading>
            <Reading color="mr-[20px] text-[#e8c02c]">RSI2:38.76</Reading>
            <Reading color="text-[#c431cb]">RSI3:47.89</Reading>
          </div>
        </div>
        <RsiChart />
        {/* crosshair runs through every pane */}
        <div className="absolute top-[1px] left-[390px] h-[1046px] w-[2px] bg-[#808080]/60" />
      </div>
      <ChipPanel />
    </main>
  )
}

function Replay() {
  return (
    <section className="h-[156px] bg-[#f7f8fa] font-[350]">
      <div className="flex h-[92px] items-center justify-between pt-[2px] pr-[18px] pl-[19px] leading-none">
        <span className="text-[48px] tracking-[-0.700px] text-[#333]">2025/11/13</span>
        <span className="flex items-center text-[44px] text-[#d35a14]">
          <svg width="53" height="53" viewBox="0 0 53 53" className="mr-[14px]" fill="none" stroke="currentColor" strokeWidth="4.500">
            <path d="M4 29a23 23 0 1 0 5-17" />
            <path d="M4 5v13h13" />
            <path d="M27 14v15h10" />
          </svg>
          超级复盘
          <svg width="20" height="32" viewBox="0 0 20 32" className="ml-[13px]" fill="none" stroke="currentColor" strokeWidth="3.500">
            <path d="M3 2l14 14L3 30" />
          </svg>
        </span>
      </div>
      <div className="flex h-[52px] items-center pl-[19px] text-[42px] leading-none tracking-[-0.400px] whitespace-nowrap text-[#666]">
        <span className="w-[237px]">价格:<span className="text-[#1a931a]">10.53</span></span>
        <span className="w-[266px]">涨幅:<span className="tracking-[1.300px] text-[#1a931a]">-0.57%</span></span>
        <span className="w-[236px]">均价:<span className="text-[#1a931a]">10.53</span></span>
        <span className="tracking-[-0.500px]">金额:<span className="text-[#333]">2.10亿</span></span>
      </div>
    </section>
  )
}

function MinuteChart() {
  return (
    <svg width="1212" height="354" viewBox="0 1841 1212 354" className="block">
      <text x="393" y="2053" textLength="432" fontSize="106" fontWeight="900" fill="#f7f7f7">
        东方财富
      </text>
      <Frame x={13} y={1842} w={1186} h={351} />
      {[313, 608.5, 903.5].map((x) => (
        <line key={x} x1={x} x2={x} y1="1842" y2="2193" stroke="#d2d2d2" strokeDasharray="2 2" />
      ))}
      {[1929.5, 2105.5].map((y) => (
        <line key={y} x1="13" x2="1199" y1={y} y2={y} stroke="#d2d2d2" strokeDasharray="2 2" />
      ))}
      <line x1="13" x2="1199" y1="2017.500" y2="2017.500" stroke="#999" strokeWidth="1.800" strokeDasharray="10 10" />
      <Label x={13} y={2033} w={101} fill="#999">10.59</Label>
      <polyline points={average} fill="none" stroke="#e8c06a" strokeWidth="2" />
      <polyline
        points={minutes.map((v, i) => `${minuteX(i)},${2017.5 + v * 17.55}`).join(' ')}
        fill="none"
        stroke="#3a72ae"
        strokeWidth="2.800"
        strokeLinejoin="round"
      />
      <Label x={13} y={1884} w={101} fill="#c9302f">10.69</Label>
      <Label x={13} y={2182} w={101} fill="#1a931a">10.49</Label>
      <Label x={1090} y={1884} w={110} fill="#c9302f">0.94%</Label>
      <Label x={1071} y={2182} w={129} fill="#1a931a">-0.94%</Label>
      <Dash x={1199} y1={2031} y2={2118} color="#ef7767" />
      <circle cx="1199" cy="2122.500" r="6" fill="#ee4e38" />
      <Badge x={1199} y={1992} kind="B" />
    </svg>
  )
}

function MinuteVolume() {
  const marked = new Map(spikes.map(([i, h, down]) => [i, { h, down }]))
  return (
    <svg width="1212" height="84" viewBox="0 2258 1212 84" className="block">
      <Frame x={13} y={2259} w={1186} h={82} />
      {[313, 608.5, 903.5].map((x) => (
        <line key={x} x1={x} x2={x} y1="2260" y2="2340" stroke="#d8d8d8" strokeDasharray="3 3" />
      ))}
      {minutes.map((_, i) => {
        if (i === 239) return null
        const s = marked.get(i) ?? { h: 3, down: i % 9 === 2 || i % 13 === 5 ? 1 : 0 }
        return <rect key={i} x={minuteX(i) - 1.5} y={2340 - s.h} width="3" height={s.h} fill={s.down ? '#1c931c' : '#c43a3a'} />
      })}
      <Label x={17} y={2292} w={84} size={32} fill="#999">14519</Label>
    </svg>
  )
}

export default function App() {
  return (
    <div className="h-[2407px] w-[1212px] overflow-hidden bg-white font-['Roboto','Noto_Sans_CJK_SC',sans-serif]">
      <Header />
      <Quote />
      <Tabs />
      <Averages />
      <Indicators />
      <div className="h-[17px] bg-gradient-to-b from-white to-[#f1f1f1]" />
      <Replay />
      <MinuteChart />
      <div className="flex h-[63px] items-center pl-[17px] text-[39px] leading-none font-[350] tracking-[-1.200px] whitespace-nowrap text-[#333]">
        <Picker className="h-[49px] w-[137px] pr-[8px] pl-[7px] text-[33px] font-normal">成交量</Picker>
        <span className="ml-[3px] w-[168px]">19.93万</span>
        <span className="tracking-[-1.300px]">
          <Reading color="text-[#333]" up>分时量:3239</Reading>
        </span>
      </div>
      <MinuteVolume />
      <div className="flex h-[62px] justify-between border-b-2 border-[#dcdcdc] pt-[9px] pr-[13px] pl-[13px] text-[43px] leading-none font-[350] tracking-[-0.400px] text-[#999]">
        <span>09:30</span>
        <span>15:00</span>
      </div>
      <div className="h-[4px] bg-[#f7f8fa]" />
    </div>
  )
}
